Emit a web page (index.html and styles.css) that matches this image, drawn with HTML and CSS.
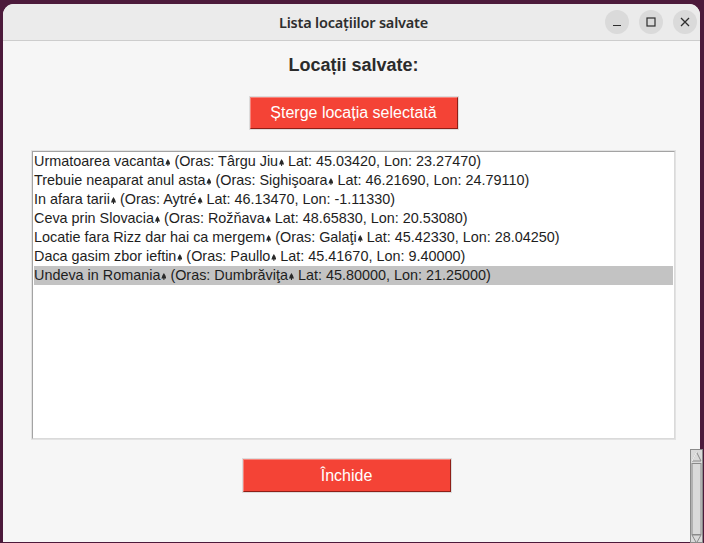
FILE: index.html
```html
<!DOCTYPE html>
<html lang="ro">
<head>
<meta charset="utf-8">
<title>Lista locațiilor salvate</title>
<link rel="stylesheet" href="styles.css">
</head>
<body>
<div class="window">
  <div class="titlebar">
    <div class="tb-spacer"></div>
    <div class="title">Lista locațiilor salvate</div>
    <div class="controls">
      <span class="ctl"><svg width="10" height="10" viewBox="0 0 10 10"><path d="M1 8.5h8" stroke="#2e2e2e" stroke-width="1.2"/></svg></span>
      <span class="ctl"><svg width="10" height="10" viewBox="0 0 10 10"><rect x="1" y="1" width="8" height="8" fill="none" stroke="#2e2e2e" stroke-width="1.2"/></svg></span>
      <span class="ctl"><svg width="10" height="10" viewBox="0 0 10 10"><path d="M1 1L9 9M9 1L1 9" stroke="#2e2e2e" stroke-width="1.3"/></svg></span>
    </div>
  </div>
  <div class="content">
    <div class="heading">Locații salvate:</div>
    <button class="tkbtn">Șterge locația selectată</button>
    <div class="listbox">
      <div class="row">Urmatoarea vacanta<span class="nl"></span> (Oras: Târgu Jiu<span class="nl"></span> Lat: 45.03420, Lon: 23.27470)</div>
      <div class="row">Trebuie neaparat anul asta<span class="nl"></span> (Oras: Sighişoara<span class="nl"></span> Lat: 46.21690, Lon: 24.79110)</div>
      <div class="row">In afara tarii<span class="nl"></span> (Oras: Aytré<span class="nl"></span> Lat: 46.13470, Lon: -1.11330)</div>
      <div class="row">Ceva prin Slovacia<span class="nl"></span> (Oras: Rožňava<span class="nl"></span> Lat: 48.65830, Lon: 20.53080)</div>
      <div class="row">Locatie fara Rizz dar hai ca mergem<span class="nl"></span> (Oras: Galaţi<span class="nl"></span> Lat: 45.42330, Lon: 28.04250)</div>
      <div class="row">Daca gasim zbor ieftin<span class="nl"></span> (Oras: Paullo<span class="nl"></span> Lat: 45.41670, Lon: 9.40000)</div>
      <div class="row selected">Undeva in Romania<span class="nl"></span> (Oras: Dumbrăviţa<span class="nl"></span> Lat: 45.80000, Lon: 21.25000)</div>
    </div>
    <button class="tkbtn close">Închide</button>
  </div>
</div>
<div class="scrollbar">
  <svg width="13" height="94" viewBox="0 0 13 94">
    <rect x="0.5" y="0.5" width="12" height="93" fill="#d9d9d9" stroke="#8a8a8a"/>
    <path d="M6.5 3L11 12H2Z" fill="#d9d9d9" stroke="#8a8a8a"/>
    <path d="M6.5 3L2 12" stroke="#ffffff"/>
    <rect x="2" y="14.5" width="9" height="71" fill="#d9d9d9" stroke="#8a8a8a"/>
    <path d="M2 86H11L6.5 94Z" fill="#d9d9d9" stroke="#8a8a8a"/>
  </svg>
</div>
</body>
</html>
```
FILE: styles.css
```css
html, body {
  margin: 0;
  padding: 0;
}
body {
  background: #4c1a3b;
  width: 704px;
  height: 543px;
  overflow: hidden;
  position: relative;
  font-family: "Liberation Sans", Arial, sans-serif;
}
.window {
  margin: 4px 0 0 3px;
  width: 697px;
  height: 538px;
  background: #f6f6f6;
  border-radius: 11px 11px 0 0;
  overflow: hidden;
  display: flex;
  flex-direction: column;
}
.titlebar {
  height: 36px;
  flex: none;
  background: #ebebeb;
  border-bottom: 1px solid #cdcdcd;
  display: grid;
  grid-template-columns: 1fr auto 1fr;
  align-items: center;
}
.title {
  font-family: "Noto Sans", "DejaVu Sans", sans-serif;
  font-weight: 600;
  font-size: 14.5px;
  color: #2e2e2e;
  letter-spacing: -0.2px;
  padding-left: 4px;
}
.controls {
  display: flex;
  justify-content: flex-end;
  gap: 10px;
  padding-right: 3px;
}
.ctl {
  width: 24px;
  height: 24px;
  border-radius: 50%;
  background: #dadada;
  display: flex;
  align-items: center;
  justify-content: center;
}
.content {
  flex: 1;
  display: flex;
  flex-direction: column;
  align-items: center;
  padding: 13px 0 0 4px;
}
.heading {
  font-weight: bold;
  font-size: 18px;
  line-height: 22px;
  color: #2b2b2b;
}
.tkbtn {
  margin-top: 21px;
  width: 208px;
  height: 32px;
  padding: 0;
  background: #f44336;
  color: #ffffff;
  font-family: "Liberation Sans", Arial, sans-serif;
  font-size: 16px;
  border: 1px solid;
  border-color: #f7837a #8e1f17 #8e1f17 #f7837a;
  outline: 1px solid #dcdcdc;
  outline-offset: 0;
  box-sizing: border-box;
}
.tkbtn.close {
  margin-top: 20px;
  height: 33px;
  margin-right: 14px;
}
.listbox {
  margin-top: 22px;
  width: 643px;
  height: 288px;
  box-sizing: border-box;
  background: #ffffff;
  border: 1px solid;
  border-color: #a3a3a3 #dadada #dadada #a3a3a3;
  box-shadow: 0 0 0 1px #e2e2e2;
  padding: 0 1px;
  font-size: 14.4px;
  color: #1e1e1e;
}
.row {
  height: 19px;
  line-height: 19px;
  white-space: nowrap;
}
.row.selected {
  background: #c3c3c3;
}
.nl {
  display: inline-block;
  width: 5px;
  height: 7px;
  margin-left: 1px;
  background: #2a2a2a;
  clip-path: polygon(50% 0, 80% 35%, 100% 80%, 60% 80%, 60% 100%, 40% 100%, 40% 80%, 0 80%, 20% 35%);
}
.scrollbar {
  position: absolute;
  left: 690px;
  top: 449px;
  width: 13px;
  height: 94px;
  line-height: 0;
}
```
